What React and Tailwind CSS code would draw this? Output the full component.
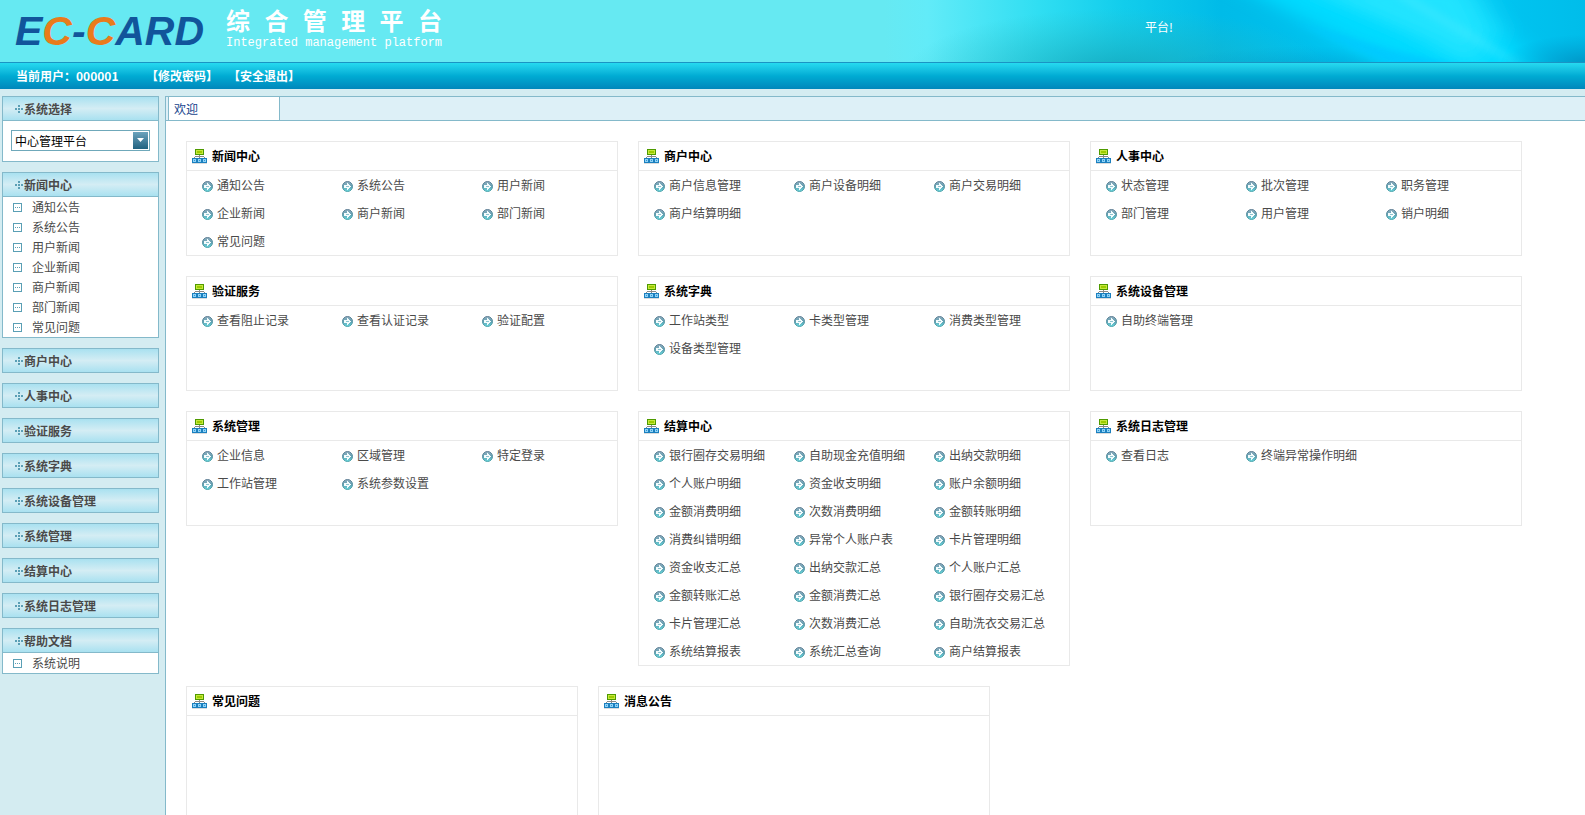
import React, { useState } from 'react';

const menus = [
  {
    title: '新闻中心',
    items: ['通知公告', '系统公告', '用户新闻', '企业新闻', '商户新闻', '部门新闻', '常见问题'],
  },
  { title: '商户中心', items: ['商户信息管理', '商户设备明细', '商户交易明细', '商户结算明细'] },
  { title: '人事中心', items: ['状态管理', '批次管理', '职务管理', '部门管理', '用户管理', '销户明细'] },
  { title: '验证服务', items: ['查看阻止记录', '查看认证记录', '验证配置'] },
  { title: '系统字典', items: ['工作站类型', '卡类型管理', '消费类型管理', '设备类型管理'] },
  { title: '系统设备管理', items: ['自助终端管理'] },
  { title: '系统管理', items: ['企业信息', '区域管理', '特定登录', '工作站管理', '系统参数设置'] },
  {
    title: '结算中心',
    items: [
      '银行圈存交易明细', '自助现金充值明细', '出纳交款明细',
      '个人账户明细', '资金收支明细', '账户余额明细',
      '金额消费明细', '次数消费明细', '金额转账明细',
      '消费纠错明细', '异常个人账户表', '卡片管理明细',
      '资金收支汇总', '出纳交款汇总', '个人账户汇总',
      '金额转账汇总', '金额消费汇总', '银行圈存交易汇总',
      '卡片管理汇总', '次数消费汇总', '自助洗衣交易汇总',
      '系统结算报表', '系统汇总查询', '商户结算报表',
    ],
  },
  { title: '系统日志管理', items: ['查看日志', '终端异常操作明细'] },
];

const helpMenu = { title: '帮助文档', items: ['系统说明'] };

const DotsIcon = () => (
  <svg width="8" height="8" viewBox="0 0 8 8" fill="#5a9fb5" shapeRendering="crispEdges" className="shrink-0">
    <rect x="3" y="0" width="2" height="2" />
    <rect x="0" y="3" width="2" height="2" />
    <rect x="3" y="3" width="2" height="2" />
    <rect x="6" y="3" width="2" height="2" />
    <rect x="3" y="6" width="2" height="2" />
  </svg>
);

const PageIcon = () => (
  <svg width="9" height="9" viewBox="0 0 9 9" shapeRendering="crispEdges" className="shrink-0">
    <rect x="0" y="0" width="9" height="9" fill="#5a9fb5" />
    <rect x="1" y="1" width="7" height="7" fill="#fff" />
    <path d="M2 4h1v1H2zM4 4h1v1H4zM6 4h1v1H6z" fill="#5a9fb5" />
  </svg>
);

const NetworkIcon = () => (
  <svg width="15" height="15" viewBox="0 0 15 15" shapeRendering="crispEdges" className="shrink-0">
    <rect x="3" y="0" width="9" height="6" fill="#4f9a00" />
    <rect x="4" y="1" width="7" height="4" fill="#c6e83c" />
    <rect x="5" y="2" width="5" height="2" fill="#9ccb00" />
    <path d="M7 6h1v2H7zM3 7h9v1H3zM2 8h1v1H2zM7 8h1v1H7zM12 8h1v1h-1z" fill="#8a8a8a" />
    <path d="M0 9h5v5H0zM5 9h5v5H5zM10 9h5v5h-5z" fill="#1b80bf" />
    <path d="M1 10h3v3H1zM6 10h3v3H6zM11 10h3v3h-3z" fill="#8fd2f7" />
    <path d="M2 11h1v1H2zM7 11h1v1H7zM12 11h1v1h-1z" fill="#2e94d0" />
    <rect x="0" y="14" width="15" height="1" fill="#dcdcdc" />
  </svg>
);

const ArrowIcon = () => (
  <svg width="11" height="11" viewBox="0 0 11 11" className="mt-0.5 shrink-0">
    <defs>
      <linearGradient id="ring" x1="0" y1="0" x2="0" y2="1">
        <stop offset="0" stopColor="#5d7d93" />
        <stop offset="1" stopColor="#4aa3ab" />
      </linearGradient>
      <linearGradient id="ball" x1="0" y1="0" x2="0" y2="1">
        <stop offset="0" stopColor="#93b0c1" />
        <stop offset="0.5" stopColor="#5f9fb2" />
        <stop offset="1" stopColor="#6bdce1" />
      </linearGradient>
    </defs>
    <circle cx="5.5" cy="5.5" r="5" fill="url(#ball)" stroke="url(#ring)" />
    <path
      d="M5 2h1v1h1v1h1v1h1v1h-1v1h-1v1h-1v1h-1v-2h-3v-3h3z"
      fill="#f4fcfd"
      shapeRendering="crispEdges"
    />
    <path d="M4 5h3v1H4z" fill="#8cc3cf" shapeRendering="crispEdges" />
  </svg>
);

// Light beams behind the right part of the header
const BannerArt = () => (
  <svg
    className="absolute inset-y-0 right-0 h-full w-[700px]"
    viewBox="0 0 700 62"
    preserveAspectRatio="none"
    aria-hidden="true"
  >
    <defs>
      <linearGradient id="sea" x1="0" y1="0" x2="1" y2="0">
        <stop offset="0" stopColor="#66e9f2" />
        <stop offset="0.06" stopColor="#62ebf8" />
        <stop offset="0.22" stopColor="#30def2" />
        <stop offset="0.34" stopColor="#12cdec" />
        <stop offset="0.48" stopColor="#00bbe8" />
        <stop offset="0.8" stopColor="#00c9f5" />
        <stop offset="1" stopColor="#00bdea" />
      </linearGradient>
      <radialGradient id="shade">
        <stop offset="0" stopColor="#12a3b8" stopOpacity="0.85" />
        <stop offset="1" stopColor="#2cbcc4" stopOpacity="0" />
      </radialGradient>
      <radialGradient id="corner">
        <stop offset="0" stopColor="#0089ba" stopOpacity="0.8" />
        <stop offset="1" stopColor="#0099cc" stopOpacity="0" />
      </radialGradient>
      <filter id="soft" x="-20%" y="-50%" width="140%" height="200%">
        <feGaussianBlur stdDeviation="16 6" />
      </filter>
      <filter id="thin" x="-20%" y="-50%" width="140%" height="200%">
        <feGaussianBlur stdDeviation="6 3" />
      </filter>
    </defs>
    <rect width="700" height="62" fill="url(#sea)" />
    <ellipse cx="235" cy="74" rx="215" ry="66" fill="url(#shade)" />
    <ellipse cx="420" cy="72" rx="150" ry="26" fill="url(#corner)" opacity="0.6" />
    <path d="M345 -20L560 -20L670 80L530 80z" fill="#00daff" filter="url(#soft)" />
    <path d="M425 -10L590 -10L610 30L590 70L540 40z" fill="#2ce6ff" opacity="0.8" filter="url(#soft)" />
    <path d="M405 20L500 48L600 72L520 72z" fill="#00c8ff" opacity="0.8" filter="url(#thin)" />
    <path d="M510 -4L525 -4L640 64L625 64z" fill="#7df4ff" opacity="0.2" filter="url(#thin)" />
    <ellipse cx="705" cy="64" rx="90" ry="30" fill="url(#corner)" />
  </svg>
);

const Header = () => (
  <header className="shrink-0 text-white">
    <div className="relative flex h-[62px] items-center overflow-hidden bg-[#66e9f2]">
      <BannerArt />
      <div className="relative w-[210px] shrink-0 pl-[15px] font-['Liberation_Sans',sans-serif] text-[41px] leading-[62px] font-bold text-[#11559b] italic">
        E<span className="text-[#e97b1b]">C</span>-<span className="text-[#e97b1b]">C</span>ARD
      </div>
      <div className="relative shrink-0 pl-4 font-['Liberation_Mono','Noto_Sans_CJK_SC',monospace]">
        <h1 className="text-2xl leading-6 font-bold">综 合 管 理 平 台</h1>
        <p className="text-xs leading-[14px]">Integrated management platform</p>
      </div>
      <p className="relative mr-[412px] mb-2 ml-auto shrink-0">平台!</p>
    </div>
    <div className="flex h-[27px] items-center border-t border-[#1a94c4] bg-linear-to-b from-[#26daf0] via-[#00abd3] to-[#0087bb] pl-4 font-bold">
      <span className="w-[130px]">当前用户：000001</span>
      <a href="#password" className="mr-2.5">【修改密码】</a>
      <a href="#logout">【安全退出】</a>
    </div>
  </header>
);

const barStyle =
  'flex h-[23px] w-full items-center gap-px bg-linear-to-b from-[#a9e1f0] via-[#d4edf4] to-[#a9e1f0] pl-3 font-bold text-[#4a4a4a]';

const MenuBox = ({ title, items, defaultOpen = false }) => {
  const [open, setOpen] = useState(defaultOpen);

  return (
    <section className="border border-[#84b9ca] bg-white">
      <button type="button" className={barStyle} aria-expanded={open} onClick={() => setOpen(!open)}>
        <DotsIcon />
        {title}
      </button>
      {open && (
        <ul className="border-t border-[#84b9ca]">
          {items.map((item) => (
            <li key={item}>
              <a href="#menu" className="flex h-5 items-center gap-2.5 pl-2.5 hover:underline">
                <PageIcon />
                {item}
              </a>
            </li>
          ))}
        </ul>
      )}
    </section>
  );
};

const Sidebar = () => (
  <nav className="flex w-[165px] shrink-0 flex-col gap-2.5 pr-1.5 pl-0.5">
    <section className="border border-[#84b9ca] bg-white">
      <label htmlFor="platform" className={barStyle}>
        <DotsIcon />
        系统选择
      </label>
      <div className="border-t border-[#84b9ca] px-2 pt-[9px] pb-2.5">
        <div className="relative">
          <select
            id="platform"
            className="block h-[21px] w-full appearance-none border border-[#6fa8ba] bg-white pl-[3px] leading-[19px] text-black"
          >
            <option>中心管理平台</option>
          </select>
          <span className="pointer-events-none absolute inset-y-0.5 right-0.5 flex w-[15px] justify-center bg-linear-to-b from-[#6ba3bd] to-[#1f6280] pt-1.5">
            <svg width="7" height="4" viewBox="0 0 7 4" fill="#fff">
              <path d="M0 0h7L3.5 4z" />
            </svg>
          </span>
        </div>
      </div>
    </section>
    {menus.map((menu, i) => (
      <MenuBox key={menu.title} {...menu} defaultOpen={i === 0} />
    ))}
    <MenuBox {...helpMenu} defaultOpen />
  </nav>
);

const CardTitle = ({ children }) => (
  <h2 className="flex h-[29px] items-center gap-[5px] border-b border-[#e9e9e9] pl-[5px] font-bold text-black">
    <NetworkIcon />
    {children}
  </h2>
);

const Card = ({ title, items }) => (
  <section className="border border-[#e9e9e9]">
    <CardTitle>{title}</CardTitle>
    <ul className="grid min-h-[84px] auto-rows-[28px] grid-cols-3 pl-2.5">
      {items.map((item) => (
        <li key={item} className="pl-[5px]">
          <a href="#page" className="flex h-7 items-center gap-1 whitespace-nowrap hover:underline">
            <ArrowIcon />
            {item}
          </a>
        </li>
      ))}
    </ul>
  </section>
);

const NoticeCard = ({ title }) => (
  <section className="h-48 w-[392px] border border-[#e9e9e9]">
    <CardTitle>{title}</CardTitle>
  </section>
);

export default function App() {
  return (
    <div className="flex h-screen flex-col overflow-hidden bg-[#d4ecf1] font-['Noto_Sans_CJK_SC',sans-serif] text-xs text-[#4a4a4a]">
      <Header />
      <div className="flex min-h-0 flex-1 pt-[7px]">
        <Sidebar />
        <main className="min-w-0 flex-1 overflow-hidden border-t border-l border-[#84b9ca] bg-white">
          <div className="flex h-6 border-b border-[#84b9ca] bg-[#ddf0f7] pl-0.5">
            <button type="button" className="w-[112px] border-x border-[#84b9ca] bg-white pl-[5px] text-left text-[#15428b]">
              欢迎
            </button>
          </div>
          <div className="pt-5 pr-[63px] pl-5">
            <div className="grid grid-cols-3 items-start gap-5">
              {menus.map((menu) => (
                <Card key={menu.title} {...menu} />
              ))}
            </div>
            <div className="mt-5 flex gap-5">
              <NoticeCard title="常见问题" />
              <NoticeCard title="消息公告" />
            </div>
          </div>
        </main>
      </div>
    </div>
  );
}
